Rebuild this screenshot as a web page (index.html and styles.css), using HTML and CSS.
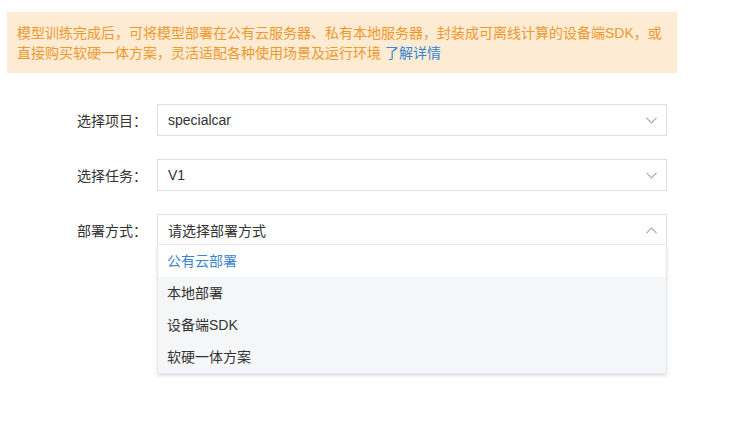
FILE: index.html
```html
<!DOCTYPE html>
<html lang="zh-CN">
<head>
<meta charset="utf-8">
<title>部署</title>
<link rel="stylesheet" href="styles.css">
</head>
<body>
<div class="banner">模型训练完成后，可将模型部署在公有云服务器、私有本地服务器，封装成可离线计算的设备端SDK，或直接购买软硬一体方案，灵活适配各种使用场景及运行环境 <a class="link" href="#">了解详情</a></div>
<div class="form">
  <div class="row">
    <div class="label">选择项目：</div>
    <div class="select">
      <span class="value">specialcar</span>
      <svg class="arrow" width="11" height="7" viewBox="0 0 11 7"><polyline points="0.5,0.8 5.5,5.8 10.5,0.8" fill="none" stroke="#a8abb2" stroke-width="1.2"/></svg>
    </div>
  </div>
  <div class="row">
    <div class="label">选择任务：</div>
    <div class="select">
      <span class="value">V1</span>
      <svg class="arrow" width="11" height="7" viewBox="0 0 11 7"><polyline points="0.5,0.8 5.5,5.8 10.5,0.8" fill="none" stroke="#a8abb2" stroke-width="1.2"/></svg>
    </div>
  </div>
  <div class="row">
    <div class="label">部署方式：</div>
    <div class="select open">
      <span class="value">请选择部署方式</span>
      <svg class="arrow" width="11" height="7" viewBox="0 0 11 7"><polyline points="0.5,6.2 5.5,1.2 10.5,6.2" fill="none" stroke="#a8abb2" stroke-width="1.2"/></svg>
      <ul class="menu">
        <li class="item selected">公有云部署</li>
        <li class="item hover">本地部署</li>
        <li class="item hover">设备端SDK</li>
        <li class="item hover">软硬一体方案</li>
      </ul>
    </div>
  </div>
</div>
</body>
</html>
```
FILE: styles.css
```css
* { box-sizing: border-box; }
html, body { min-height: 427px; }
body {
  margin: 0;
  background: #fff;
  font-family: "Liberation Sans", "Noto Sans CJK SC", sans-serif;
  font-size: 14px;
  color: #333;
}
.banner {
  margin: 12px 0 0 7px;
  width: 670px;
  padding: 11px 10px 10px 10px;
  line-height: 20px;
  background: #fdebd3;
  color: #f0982c;
}
.link {
  color: #3586d6;
  text-decoration: none;
}
.form {
  margin-top: 31px;
  padding-left: 67px;
  padding-bottom: 160px;
}
.row {
  display: flex;
  align-items: center;
  height: 32px;
  margin-bottom: 23px;
}
.label {
  width: 80px;
  margin-right: 10px;
  text-align: right;
  color: #333;
}
.select {
  position: relative;
  width: 510px;
  height: 32px;
  border: 1px solid #dcdfe6;
  padding: 0 10px;
  display: flex;
  align-items: center;
  justify-content: space-between;
}
.value { color: #333; }
.arrow { display: block; margin-right: -1px; }
.menu {
  position: absolute;
  top: 29px;
  left: -1px;
  width: 510px;
  margin: 0;
  padding: 0;
  list-style: none;
  background: #fff;
  border: 1px solid #e4e7ed;
  box-shadow: 0 2px 3px rgba(0, 0, 0, 0.12);
  z-index: 2;
}
.item {
  display: block;
  height: 32px;
  line-height: 32px;
  padding: 0 9px;
  color: #333;
}
.item.selected { color: #3b86cf; background: #fff; }
.item.hover { background: #f5f6f8; }
```
